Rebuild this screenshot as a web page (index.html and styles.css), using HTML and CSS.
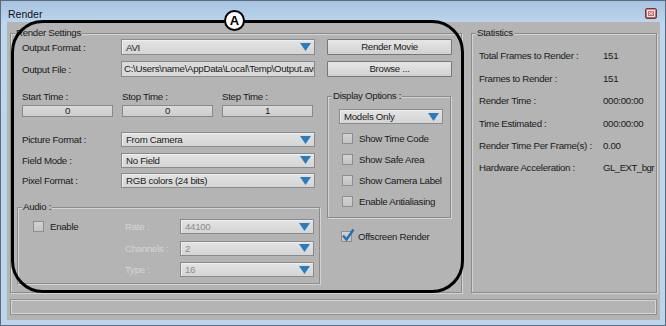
FILE: index.html
```html
<!DOCTYPE html>
<html>
<head>
<meta charset="utf-8">
<title>Render</title>
<link rel="stylesheet" href="styles.css">
</head>
<body>
<div class="window">
  <div class="titlebar">
    <span class="title">Render</span>
    <span class="close"><svg width="8" height="7" viewBox="0 0 8 7"><rect x="0.5" y="0.5" width="7" height="6" fill="none" stroke="#f3e2e2"/><path d="M2 2L6 5M6 2L2 5" stroke="#f3e2e2"/></svg></span>
  </div>
  <div class="client">
    <div class="main">
      <div class="group rs">
        <span class="legend">Render Settings</span>
        <div class="rs-left">
          <div class="row row-top"><span class="lbl">Output Format :</span><div class="combo wide"><span class="val">AVI</span><svg class="arrow" viewBox="0 0 11 8"><path d="M0 0H11L5.5 8Z"/></svg></div></div>
          <div class="row row-file"><span class="lbl">Output File :</span><div class="field wide">C:\Users\name\AppData\Local\Temp\Output.avi</div></div>
          <div class="times">
            <div class="time"><span class="tlbl">Start Time :</span><div class="num">0</div></div>
            <div class="time"><span class="tlbl">Stop Time :</span><div class="num">0</div></div>
            <div class="time"><span class="tlbl">Step Time :</span><div class="num">1</div></div>
          </div>
          <div class="formats">
            <div class="frow"><span class="lbl">Picture Format :</span><div class="combo wide"><span class="val">From Camera</span><svg class="arrow" viewBox="0 0 11 8"><path d="M0 0H11L5.5 8Z"/></svg></div></div>
            <div class="frow"><span class="lbl">Field Mode :</span><div class="combo wide"><span class="val">No Field</span><svg class="arrow" viewBox="0 0 11 8"><path d="M0 0H11L5.5 8Z"/></svg></div></div>
            <div class="frow"><span class="lbl">Pixel Format :</span><div class="combo wide"><span class="val">RGB colors (24 bits)</span><svg class="arrow" viewBox="0 0 11 8"><path d="M0 0H11L5.5 8Z"/></svg></div></div>
          </div>
          <div class="group audio">
            <span class="legend">Audio :</span>
            <div class="audio-grid">
              <div class="check"><span class="box"></span>Enable</div>
              <span class="dlbl">Rate :</span>
              <div class="combo dis"><span class="val">44100</span><svg class="arrow" viewBox="0 0 11 8"><path d="M0 0H11L5.5 8Z"/></svg></div>
              <span></span>
              <span class="dlbl">Channels :</span>
              <div class="combo dis"><span class="val">2</span><svg class="arrow" viewBox="0 0 11 8"><path d="M0 0H11L5.5 8Z"/></svg></div>
              <span></span>
              <span class="dlbl">Type :</span>
              <div class="combo dis"><span class="val">16</span><svg class="arrow" viewBox="0 0 11 8"><path d="M0 0H11L5.5 8Z"/></svg></div>
            </div>
          </div>
        </div>
        <div class="rs-right">
          <div class="btn">Render Movie</div>
          <div class="btn btn2">Browse ...</div>
          <div class="group disp">
            <span class="legend">Display Options :</span>
            <div class="combo models"><span class="val">Models Only</span><svg class="arrow" viewBox="0 0 11 8"><path d="M0 0H11L5.5 8Z"/></svg></div>
            <div class="checks">
              <div class="check crow"><span class="box"></span>Show Time Code</div>
              <div class="check crow"><span class="box"></span>Show Safe Area</div>
              <div class="check crow"><span class="box"></span>Show Camera Label</div>
              <div class="check crow"><span class="box"></span>Enable Antialiasing</div>
            </div>
          </div>
          <div class="check offscreen"><span class="box on"><svg class="tick" viewBox="0 0 14 14"><path d="M2 7.5L5.5 11.5L12.5 1.5"/></svg></span>Offscreen Render</div>
        </div>
      </div>
      <div class="group stats">
        <span class="legend">Statistics</span>
        <div class="stat-grid">
          <span>Total Frames to Render :</span><span>151</span>
          <span>Frames to Render :</span><span>151</span>
          <span>Render Time :</span><span>000:00:00</span>
          <span>Time Estimated :</span><span>000:00:00</span>
          <span>Render Time Per Frame(s) :</span><span>0.00</span>
          <span>Hardware Acceleration :</span><span class="tight">GL_EXT_bgr</span>
        </div>
      </div>
    </div>
    <div class="statusbar"></div>
  </div>
  <div class="annot"></div>
  <div class="badge">A</div>
</div>
</body>
</html>
```
FILE: styles.css
```css
* { box-sizing: border-box; }
html, body { margin: 0; padding: 0; }
body {
  width: 666px;
  height: 326px;
  overflow: hidden;
  background: #ffffff;
  font-family: "Liberation Sans", Arial, sans-serif;
  font-size: 9.7px;
  letter-spacing: -0.3px;
  color: #1a1a1a;
}
.window {
  position: relative;
  width: 666px;
  height: 326px;
  display: flex;
  flex-direction: column;
  padding: 0 5px 5px 6px;
  border: 1px solid #5d6b7b;
  background: linear-gradient(#a7c3e1, #bed6ee 22px, #bcd4ec);
}
.titlebar {
  height: 21px;
  display: flex;
  align-items: center;
  justify-content: space-between;
  padding: 4px 3px 0 1px;
}
.title { font-size: 10.5px; letter-spacing: 0; color: #111; }
.close {
  width: 12px;
  height: 11px;
  border: 1px solid #7b3434;
  border-radius: 2px;
  background: linear-gradient(#d08a86, #b5605c);
  display: flex;
  align-items: center;
  justify-content: center;
}
.close svg { display: block; }
.client {
  flex: 1;
  background: #b4b4b4;
  padding: 11px 3px 5px 3px;
  display: flex;
  flex-direction: column;
}
.main { display: flex; gap: 9px; height: 260px; }
.group {
  position: relative;
  border: 1px solid #8b8b8b;
  box-shadow: inset 1px 1px 0 #d4d4d4, 1px 1px 0 #d4d4d4;
}
.legend {
  position: absolute;
  top: -7px;
  left: 4px;
  padding: 0 1px;
  line-height: 12px;
  background: #b4b4b4;
  white-space: nowrap;
}
.rs {
  width: 452px;
  height: 260px;
  display: flex;
  gap: 7px;
  padding-left: 6px;
}
.rs-left {
  width: 303px;
  padding-top: 5px;
  display: flex;
  flex-direction: column;
}
.row { display: flex; align-items: center; height: 16px; margin: 0 5px; }
.row-file { margin-top: 6px; }
.lbl { width: 99px; flex: none; white-space: nowrap; }
.wide { width: 194px; }
.combo {
  display: flex;
  align-items: center;
  justify-content: space-between;
  height: 100%;
  padding: 0 3px 0 4px;
  border: 1px solid #8a8a8a;
  background: linear-gradient(#e3e3e3, #d5d5d5);
  box-shadow: inset 1px 1px 0 #efefef;
  white-space: nowrap;
}
.arrow { width: 11px; height: 8px; flex: none; fill: #2a7cbd; }
.field {
  height: 100%;
  padding: 0 2px;
  line-height: 14px;
  border: 1px solid #8a8a8a;
  background: #dadada;
  white-space: nowrap;
  overflow: hidden;
  text-overflow: clip;
}
.times { display: flex; gap: 9px; margin: 14px 5px 0; }
.time { width: 91px; display: flex; flex-direction: column; }
.tlbl { height: 11px; line-height: 11px; margin-bottom: 3px; white-space: nowrap; }
.num {
  height: 12px;
  line-height: 10px;
  text-align: center;
  border: 1px solid #898989;
  background: linear-gradient(#dadada, #cdcdcd);
}
.formats { margin: 15px 5px 0; display: flex; flex-direction: column; gap: 5.5px; }
.frow { display: flex; align-items: center; height: 15px; }
.audio { margin-top: 19px; height: 77px; }
.audio-grid {
  display: grid;
  grid-template-columns: 92px 55px 134px;
  grid-auto-rows: 15px;
  row-gap: 6.5px;
  align-items: center;
  padding: 11px 0 0 15px;
}
.dlbl { color: #d5d5d5; white-space: nowrap; }
.combo.dis { color: #8c8c8c; }
.check { display: flex; align-items: center; white-space: nowrap; }
.box {
  position: relative;
  width: 11px;
  height: 11px;
  flex: none;
  margin-right: 6px;
  border: 1px solid #8e8e8e;
  background: linear-gradient(#d3d3d3, #c3c3c3);
}
.tick {
  position: absolute;
  left: -1px;
  top: -4px;
  width: 14px;
  height: 14px;
  fill: none;
  stroke: #1f72b6;
  stroke-width: 2.4;
}
.rs-right {
  width: 125px;
  padding-top: 5px;
  display: flex;
  flex-direction: column;
}
.btn {
  height: 16px;
  line-height: 14px;
  text-align: center;
  border: 1px solid #777777;
  border-radius: 1px;
  background: linear-gradient(#e6e6e6, #d1d1d1);
}
.btn2 { margin-top: 6px; }
.disp { margin-top: 19px; width: 124px; height: 122px; padding-top: 12px; }
.models { margin-left: 11px; width: 104px; height: 15px; }
.checks { margin: 3.5px 0 0 14px; }
.crow { height: 21px; }
.offscreen { margin: 10px 0 0 14px; height: 16px; }
.stats { width: 186px; height: 260px; padding: 10.8px 0 0 7px; }
.stat-grid {
  display: grid;
  grid-template-columns: 124px 1fr;
  grid-auto-rows: 22.4px;
  align-items: center;
  white-space: nowrap;
}
.tight { letter-spacing: -0.55px; }
.statusbar {
  margin-top: 6px;
  height: 16px;
  border: 1px solid #8f8f8f;
  box-shadow: inset 0 0 0 1px #d6d6d6;
}
.annot {
  position: absolute;
  left: 10px;
  top: 18.5px;
  width: 453px;
  height: 273px;
  border: 3px solid #000;
  border-radius: 32px;
  pointer-events: none;
}
.badge {
  position: absolute;
  left: 223px;
  top: 9px;
  width: 21px;
  height: 21px;
  border: 2px solid #000;
  border-radius: 50%;
  background: #fff;
  color: #000;
  font-family: "Liberation Sans", Arial, sans-serif;
  font-weight: bold;
  font-size: 13px;
  letter-spacing: 0;
  line-height: 17px;
  text-align: center;
}
```
